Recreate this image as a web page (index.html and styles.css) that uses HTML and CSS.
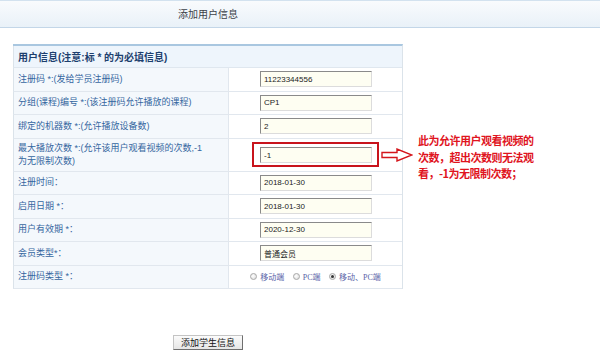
FILE: index.html
```html
<!DOCTYPE html>
<html lang="zh-CN">
<head>
<meta charset="utf-8">
<title>添加用户信息</title>
<link rel="stylesheet" href="styles.css">
</head>
<body>
<div class="topbar"><div class="topbar-inner">添加用户信息</div></div>
<div class="page">
  <table class="form">
    <tr class="head"><th colspan="2">用户信息(注意:标 * 的为必填信息)</th></tr>
    <tr><td class="lbl">注册码 *:(发给学员注册码)</td><td class="val"><input class="inp" value="11223344556" readonly></td></tr>
    <tr><td class="lbl">分组(课程)编号 *:(该注册码允许播放的课程)</td><td class="val"><input class="inp" value="CP1" readonly></td></tr>
    <tr><td class="lbl">绑定的机器数 *:(允许播放设备数)</td><td class="val"><input class="inp" value="2" readonly></td></tr>
    <tr class="tall"><td class="lbl">最大播放次数 *:(允许该用户观看视频的次数,-1<br>为无限制次数)</td><td class="val"><span class="mark"><input class="inp" value="-1" readonly></span></td></tr>
    <tr><td class="lbl">注册时间：</td><td class="val"><input class="inp" value="2018-01-30" readonly></td></tr>
    <tr><td class="lbl">启用日期 *：</td><td class="val"><input class="inp" value="2018-01-30" readonly></td></tr>
    <tr><td class="lbl">用户有效期 *：</td><td class="val"><input class="inp" value="2020-12-30" readonly></td></tr>
    <tr><td class="lbl">会员类型*：</td><td class="val"><input class="inp" value="普通会员" readonly></td></tr>
    <tr><td class="lbl">注册码类型 *：</td><td class="val center">
      <span class="opt"><span class="radio"></span>移动端</span>
      <span class="opt"><span class="radio"></span>PC端</span>
      <span class="opt"><span class="radio on"></span>移动、PC端</span>
    </td></tr>
  </table>
  <div class="actions"><button class="btn" type="button">添加学生信息</button></div>
  <div class="note">
    <svg class="arrow" width="32" height="14" viewBox="0 0 32 14"><polygon points="1,4.5 16,4.5 16,1 31,7 16,13 16,9.5 1,9.5" fill="#fff" stroke="#d4161c" stroke-width="1.4" stroke-linejoin="miter"/></svg>
    <p class="note-text">此为允许用户观看视频的<br>次数，超出次数则无法观<br>看，-1为无限制次数；</p>
  </div>
</div>
</body>
</html>
```
FILE: styles.css
```css
html, body {
  margin: 0;
  padding: 0;
  background: #fff;
  font-family: "Liberation Sans", "Noto Sans CJK SC", sans-serif;
}

.topbar {
  width: 600px;
  height: 26px;
  border-top: 1px solid #d3e2ef;
  border-bottom: 1px solid #c3d6e8;
  background: linear-gradient(#f9fbfd, #e9f1f8);
}

.topbar-inner {
  width: 416px;
  text-align: center;
  font-family: "Noto Sans CJK SC", sans-serif;
  font-size: 10px;
  line-height: 26px;
  color: #3c4148;
}

.page {
  position: relative;
  width: 416px;
  padding-top: 16px;
}

.form {
  width: 390px;
  margin: 0 auto;
  border-collapse: separate;
  border-spacing: 0;
  border-top: 2px solid #a9c7e0;
  border-right: 1px solid #dbe3ea;
  font-size: 9px;
}

.form th {
  height: 21px;
  padding: 0 4px;
  text-align: left;
  font-size: 10px;
  font-weight: bold;
  color: #1d3f6e;
  background: #eef5fc;
  border-bottom: 1px solid #dfe7ef;
  border-left: 1px solid #dbe3ea;
}

.form td {
  height: 22.5px;
  padding: 0;
  border-bottom: 1px solid #e1e7ee;
}

.lbl {
  width: 210px;
  padding-left: 4px !important;
  color: #3566a0;
  background: #f4f8fc;
  border-left: 1px solid #dbe3ea;
  border-right: 1px solid #e1e7ee;
  line-height: 13px;
}

.val {
  padding-left: 31px !important;
  background: #fff;
}

.tall td {
  height: 32px;
}

.center {
  text-align: center;
  padding-left: 0 !important;
}

.inp {
  box-sizing: border-box;
  width: 112px;
  height: 16px;
  margin: 0;
  padding: 0 3px;
  border: 1px solid;
  border-color: #8a8a8a #dcdcdc #dcdcdc #8a8a8a;
  background: #fefef2;
  font-family: "Liberation Sans", "Noto Sans CJK SC", sans-serif;
  font-size: 8px;
  color: #222;
  vertical-align: middle;
  outline: none;
}

.mark {
  display: inline-block;
  margin-left: -8px;
  padding: 3px 5px 2px 6px;
  border: 2px solid #c8141c;
  line-height: 0;
}

.opt {
  display: inline-flex;
  align-items: center;
  gap: 3px;
  margin: 0 3px;
  font-size: 8px;
  color: #5a64a8;
  font-family: "Liberation Serif", "Noto Sans CJK SC", serif;
}

.radio {
  display: inline-block;
  box-sizing: border-box;
  width: 7px;
  height: 7px;
  border-radius: 50%;
  border: 1px solid #a8a8a8;
  background: radial-gradient(circle at 40% 40%, #fff, #d8d8d8);
  position: relative;
}

.radio.on::after {
  content: "";
  position: absolute;
  left: 1px;
  top: 1px;
  width: 3px;
  height: 3px;
  border-radius: 50%;
  background: #333;
}

.actions {
  text-align: center;
  padding-top: 46px;
  line-height: 0;
}

.btn {
  height: 15px;
  padding: 0 7px;
  border: 1px solid;
  border-color: #c4c4c4 #6e6e6e #6e6e6e #c4c4c4;
  background: linear-gradient(#fbfbfb, #e6e6e6);
  font-family: "Noto Sans CJK SC", sans-serif;
  font-size: 9px;
  line-height: 12px;
  color: #111;
  vertical-align: top;
}

.note {
  position: absolute;
  left: 381px;
  top: 104px;
  width: 200px;
}

.arrow {
  position: absolute;
  left: 0;
  top: 16px;
}

.note-text {
  margin: 0 0 0 37px;
  font-family: "Noto Sans CJK SC", sans-serif;
  font-size: 11px;
  line-height: 16.7px;
  font-weight: bold;
  color: #e0141e;
  letter-spacing: -0.5px;
}
```
